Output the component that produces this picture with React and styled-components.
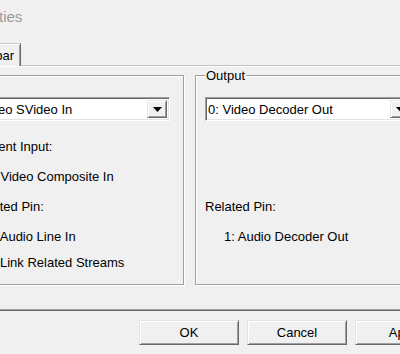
import React from 'react'
import styled, { createGlobalStyle } from 'styled-components'

const GlobalStyle = createGlobalStyle`
  html, body {
    margin: 0;
    padding: 0;
    background: #f0f0f0;
  }
  body {
    font-family: "Liberation Sans", Arial, sans-serif;
    font-size: 13px;
    color: #000;
  }
`

const Screen = styled.div`
  width: 400px;
  height: 354px;
  overflow: hidden;
  background: #f0f0f0;
`

// the dialog is wider than the screenshot, its left part sits off screen
const Window = styled.div`
  width: 523px;
  margin-left: -60px;
  display: flex;
  flex-direction: column;
`

const TitleBar = styled.div`
  height: 32px;
  padding-left: 14px;
  display: flex;
  align-items: center;
  font-size: 15px;
  color: #9a9a9a;
  white-space: nowrap;
`

const TabStrip = styled.div`
  display: flex;
  margin-top: 11px;
  padding-left: 6px;
  height: 22px;
`

const Tab = styled.div`
  position: relative;
  z-index: 1;
  width: 75px;
  height: 23px;
  box-sizing: border-box;
  padding-right: 6px;
  display: flex;
  align-items: center;
  justify-content: flex-end;
  background: #f0f0f0;
  border: 1px solid;
  border-bottom: none;
  border-color: #c8c8c8 #696969 transparent #c8c8c8;
  box-shadow: inset 1px 1px 0 #fff, inset -1px 0 0 #a0a0a0;
  white-space: nowrap;
`

const Panel = styled.div`
  margin: 0 6px;
  padding: 2px 5px 25px;
  border: 1px solid;
  border-color: #c4c4c4 #696969 #696969 #c4c4c4;
  box-shadow: inset 1px 1px 0 #fff, inset -1px -1px 0 #a0a0a0;
  display: grid;
  grid-template-columns: 232px 232px;
  column-gap: 11px;
`

const GroupBox = styled.fieldset`
  margin: 0;
  padding: 14px 13px 11px 9px;
  min-width: 0;
  border: 1px solid #a0a0a0;
  box-shadow: 1px 1px 0 #fff, inset 1px 1px 0 #fff;
  display: flex;
  flex-direction: column;
`

const Caption = styled.legend`
  margin-left: 0;
  padding: 0 1px;
  line-height: 15px;
  background: #f0f0f0;
`

const Combo = styled.div`
  height: 24px;
  box-sizing: border-box;
  margin-bottom: 10px;
  padding: 2px;
  display: flex;
  background: #fff;
  border: 1px solid;
  border-color: #a0a0a0 #fff #fff #a0a0a0;
  box-shadow: inset 1px 1px 0 #696969, inset -1px -1px 0 #e3e3e3;
`

const ComboText = styled.div`
  flex: 1;
  display: flex;
  align-items: center;
  white-space: nowrap;
  overflow: hidden;
`

const DropButton = styled.div`
  width: 20px;
  box-sizing: border-box;
  display: flex;
  align-items: center;
  justify-content: center;
  background: #f0f0f0;
  border: 1px solid;
  border-color: #e3e3e3 #696969 #696969 #e3e3e3;
  box-shadow: inset 1px 1px 0 #fff, inset -1px -1px 0 #a0a0a0;
`

const Row = styled.div`
  height: 30px;
  padding-left: ${p => p.$indent || 0}px;
  display: flex;
  align-items: center;
  white-space: nowrap;
`

const CheckRow = styled.label`
  height: 22px;
  padding-left: 20px;
  display: flex;
  align-items: center;
  gap: 5px;
  white-space: nowrap;
`

const CheckBox = styled.span`
  width: 13px;
  height: 13px;
  box-sizing: border-box;
  background: #fff;
  border: 1px solid;
  border-color: #a0a0a0 #fff #fff #a0a0a0;
  box-shadow: inset 1px 1px 0 #696969, inset -1px -1px 0 #e3e3e3;
`

const ButtonBar = styled.div`
  margin-top: 9px;
  padding: 0 8px;
  display: flex;
  justify-content: flex-end;
  gap: 8px;
`

const Button = styled.button`
  width: 100px;
  height: 25px;
  padding: 0;
  font: inherit;
  color: #000;
  background: #f0f0f0;
  border: 1px solid;
  border-color: #e3e3e3 #696969 #696969 #e3e3e3;
  box-shadow: inset 1px 1px 0 #fff, inset -1px -1px 0 #a0a0a0;
`

const Arrow = () => (
  <svg width='9' height='5' viewBox='0 0 9 5'>
    <polygon points='0,0 9,0 4.5,5' fill='#000' />
  </svg>
)

const Select = ({ value }) => (
  <Combo>
    <ComboText>{value}</ComboText>
    <DropButton><Arrow /></DropButton>
  </Combo>
)

const App = () => {
  return (
    <Screen>
      <GlobalStyle />
      <Window>
        <TitleBar>Properties</TitleBar>
        <TabStrip>
          <Tab>Crossbar</Tab>
        </TabStrip>
        <Panel>
          <GroupBox>
            <Caption>Input</Caption>
            <Select value='2: Video SVideo In' />
            <Row $indent={11}>Current Input:</Row>
            <Row $indent={24}>1: Video Composite In</Row>
            <Row $indent={11}>Related Pin:</Row>
            <Row $indent={24}>4: Audio Line In</Row>
            <CheckRow><CheckBox />Link Related Streams</CheckRow>
          </GroupBox>
          <GroupBox>
            <Caption>Output</Caption>
            <Select value='0: Video Decoder Out' />
            <Row />
            <Row />
            <Row>Related Pin:</Row>
            <Row $indent={19}>1: Audio Decoder Out</Row>
          </GroupBox>
        </Panel>
        <ButtonBar>
          <Button>OK</Button>
          <Button>Cancel</Button>
          <Button>Apply</Button>
        </ButtonBar>
      </Window>
    </Screen>
  )
}

export default App
